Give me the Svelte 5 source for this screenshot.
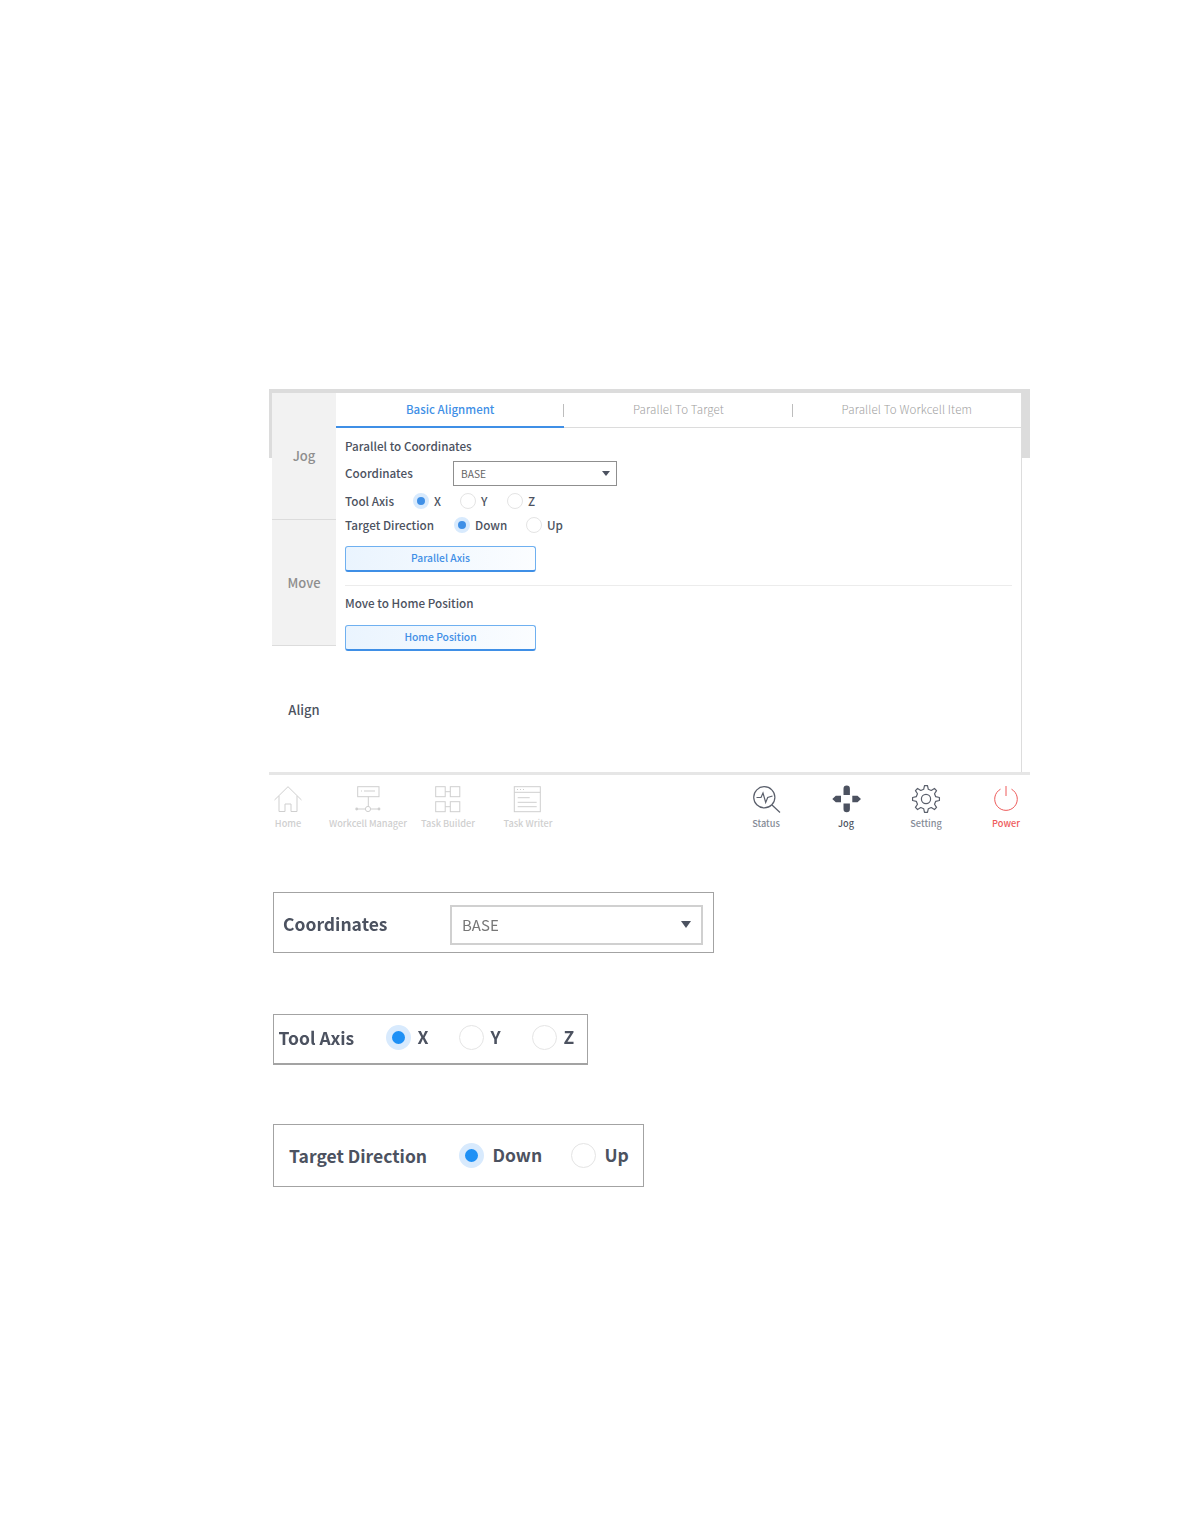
<script lang="ts">
  const tabs = ['Basic Alignment', 'Parallel To Target', 'Parallel To Workcell Item'];
  const side = ['Jog', 'Move', 'Align'];

  // gear outline, 8 teeth around the centre
  function gearPath(cx: number, cy: number, r1: number, r2: number, teeth: number) {
    let d = '';
    for (let i = 0; i < teeth; i++) {
      const a = (i / teeth) * Math.PI * 2 - Math.PI / 2;
      const step = (Math.PI * 2) / teeth;
      const pts = [
        [r2, a - step * 0.14],
        [r2, a + step * 0.14],
        [r1, a + step * 0.3],
        [r1, a + step * 0.7]
      ];
      for (const [r, t] of pts) {
        const x = (cx + r * Math.cos(t)).toFixed(2);
        const y = (cy + r * Math.sin(t)).toFixed(2);
        d += (d ? 'L' : 'M') + x + ' ' + y + ' ';
      }
    }
    return d + 'Z';
  }
  const gear = gearPath(15, 14, 10, 13.5, 8);
</script>

{#snippet radio(label, on, cls = '')}
  <span class="radio {cls}">
    <span class="dot" class:on></span>
    <span class="txt">{label}</span>
  </span>
{/snippet}

<div class="page">
  <div class="frame">
    <div class="panel">
      <div class="side">
        {#each side as s, i}
          <div class="side-item" class:current={i === 2}>{s}</div>
        {/each}
      </div>
      <div class="main">
        <div class="tabs">
          {#each tabs as t, i}
            <div class="tab" class:active={i === 0}>{t}</div>
          {/each}
        </div>
        <div class="body">
          <div class="heading">Parallel to Coordinates</div>
          <div class="row coord">
            <span class="label">Coordinates</span>
            <div class="select"><span>BASE</span><i class="caret"></i></div>
          </div>
          <div class="row axis">
            <span class="label">Tool Axis</span>
            <div class="radios">
              {@render radio('X', true)}
              {@render radio('Y', false)}
              {@render radio('Z', false)}
            </div>
          </div>
          <div class="row dir">
            <span class="label">Target Direction</span>
            <div class="radios">
              {@render radio('Down', true)}
              {@render radio('Up', false)}
            </div>
          </div>
          <button class="action first">Parallel Axis</button>
          <div class="divider"></div>
          <div class="heading home">Move to Home Position</div>
          <button class="action">Home Position</button>
        </div>
      </div>
    </div>
  </div>

  <nav class="nav">
    <div class="group">
      <div class="item off">
        <svg viewBox="0 0 30 30"><path d="M1.5 15 15 1.7 28.5 15M6 11v15.5h6V19h6v7.5h6V11" /></svg>
        <span>Home</span>
      </div>
      <div class="item off">
        <svg viewBox="0 0 30 30">
          <rect x="4.7" y="1.7" width="21.3" height="10" />
          <path d="M8 6h1M11 6h11M15.3 11.7V21.5M4 24h8M18 24h8" />
          <circle cx="15" cy="24" r="2.6" />
          <circle class="solid" cx="3.7" cy="24" r="1.4" />
          <circle class="solid" cx="26" cy="24" r="1.4" />
        </svg>
        <span>Workcell Manager</span>
      </div>
      <div class="item off">
        <svg viewBox="0 0 30 30">
          <rect x="2.7" y="1.7" width="9.5" height="10" />
          <rect x="17.3" y="1.7" width="9.5" height="10" />
          <rect x="2.7" y="16.7" width="9.5" height="10" />
          <rect x="17.3" y="16.7" width="9.5" height="10" />
          <path d="M12.2 6.7h5M12.2 21.7h5" />
        </svg>
        <span>Task Builder</span>
      </div>
      <div class="item off">
        <svg viewBox="0 0 30 30">
          <rect x="1.3" y="1.7" width="26" height="25" />
          <path d="M1.3 7.3h26M4 4.5h1M7 4.5h1M10 4.5h1M4.7 12.7h12M4.7 17.3h19M4.7 21.7h19" />
        </svg>
        <span>Task Writer</span>
      </div>
    </div>
    <div class="group">
      <div class="item status">
        <svg viewBox="0 0 30 30">
          <circle cx="13.3" cy="12.3" r="10.6" />
          <path d="M21 20 29 27.5M5.5 12.5H10l2-4.500 2.700 9.500 2-5 4.800-1.500" />
        </svg>
        <span>Status</span>
      </div>
      <div class="item jog">
        <svg viewBox="0 0 30 30">
          <path class="solid" d="M12.500 10V3.700a3.200 3.200 0 0 1 6.400 0V10zM12.500 18.500V24a3.200 3.200 0 0 0 6.400 0v-5.500zM1.300 14l3.500-3.300H10v6.600H4.800zM30 14l-3.500-3.300h-5.200v6.600h5.200z" />
        </svg>
        <span>Jog</span>
      </div>
      <div class="item status">
        <svg viewBox="0 0 30 30">
          <path d={gear} stroke-linejoin="round" />
          <circle cx="15" cy="14" r="4.600" />
        </svg>
        <span>Setting</span>
      </div>
      <div class="item power">
        <svg viewBox="0 0 30 30">
          <path d="M9.500 4.200a11.300 11.300 0 1 0 11 0M15 1v10" />
        </svg>
        <span>Power</span>
      </div>
    </div>
  </nav>

  <div class="callout c1">
    <span class="c-label">Coordinates</span>
    <div class="c-select"><span>BASE</span><i class="caret big"></i></div>
  </div>

  <div class="callout c2">
    <span class="c-label">Tool Axis</span>
    <div class="radios">
      {@render radio('X', true, 'big')}
      {@render radio('Y', false, 'big')}
      {@render radio('Z', false, 'big')}
    </div>
  </div>

  <div class="callout c3">
    <span class="c-label">Target Direction</span>
    <div class="radios">
      {@render radio('Down', true, 'big')}
      {@render radio('Up', false, 'big')}
    </div>
  </div>
</div>

<style>
  :global(body) {
    background: #fff;
  }

  .page {
    height: 1148px;
    padding: 389px 0 0 269px;
    font-family: 'Noto Sans CJK KR', 'Noto Sans', sans-serif;
    color: #4c5260;
  }

  .frame {
    width: 761px;
    height: 386px;
    box-sizing: border-box;
    padding: 4px 8px 0 3px;
    background: linear-gradient(#dcdcdc, #dcdcdc) top / 100% 69px no-repeat;
    border-bottom: 3px solid #e6e6e6;
  }

  .panel {
    display: flex;
    height: 379px;
    background: #fff;
    border-right: 1px solid #ddd;
    width: 749px;
  }

  .side {
    width: 64px;
    display: flex;
    flex-direction: column;
  }

  .side-item {
    flex: 1;
    display: flex;
    align-items: center;
    justify-content: center;
    background: #f2f2f2;
    color: #8e8e8e;
    font-size: 13px;
    font-weight: 500;
    border-bottom: 1px solid #dcdcdc;
  }

  .side-item.current {
    background: #fff;
    color: #4c5260;
    border-bottom: 0;
  }

  .main {
    flex: 1;
    min-width: 0;
  }

  .tabs {
    display: flex;
    height: 35px;
    box-sizing: border-box;
    border-bottom: 1px solid #dcdcdc;
  }

  .tab {
    flex: 1;
    display: flex;
    align-items: center;
    justify-content: center;
    font-size: 11.5px;
    font-weight: 300;
    letter-spacing: 0.15px;
    color: #a0a0a0;
    position: relative;
    padding-bottom: 2px;
  }

  .tab:not(:last-child)::after {
    content: '';
    position: absolute;
    right: 0;
    top: 11px;
    height: 13px;
    border-right: 1px solid #bdbdbd;
  }

  .tab.active {
    color: #3f8fe6;
    font-weight: 500;
    letter-spacing: 0;
    border-bottom: 2px solid #3f8fe6;
    margin-bottom: -1px;
  }

  .body {
    padding: 10px 9px 0;
  }

  .heading {
    font-size: 11.7px;
    font-weight: 500;
    line-height: 16px;
  }

  .row {
    display: flex;
    align-items: center;
    font-size: 11.7px;
    font-weight: 500;
  }

  .label,
  .txt {
    flex: none;
    padding-bottom: 2px;
  }

  .coord {
    margin-top: 7px;
    height: 25px;
  }

  .coord .label {
    width: 108px;
  }

  .select {
    width: 164px;
    height: 25px;
    box-sizing: border-box;
    border: 1px solid #8f8f8f;
    display: flex;
    align-items: center;
    justify-content: space-between;
    padding: 0 6px 0 7px;
    font-size: 10.2px;
    font-weight: 400;
    color: #666;
  }

  .caret {
    width: 0;
    height: 0;
    border-left: 4px solid transparent;
    border-right: 4px solid transparent;
    border-top: 5px solid #4c5260;
  }

  .caret.big {
    border-left-width: 5.5px;
    border-right-width: 5.5px;
    border-top-width: 7px;
  }

  .axis {
    margin-top: 3px;
    height: 24px;
  }

  .axis .label {
    width: 68px;
  }

  .axis .radio {
    width: 47px;
  }

  .dir {
    height: 24px;
  }

  .dir .label {
    width: 109px;
  }

  .dir .radio {
    width: 72px;
  }

  .radios {
    display: flex;
    align-items: center;
  }

  .radio {
    display: inline-flex;
    align-items: center;
    gap: 5px;
  }

  .dot {
    flex: none;
    width: 16px;
    height: 16px;
    box-sizing: border-box;
    border-radius: 50%;
    border: 1px solid #e4e4e4;
    background: #fff;
    display: block;
  }

  .dot.on {
    border: 4px solid #d8eafd;
    background: #3f8fe6;
  }

  .action {
    display: block;
    width: 191px;
    height: 26px;
    padding: 0 0 2px;
    box-sizing: border-box;
    border: 1px solid #6fb0f0;
    border-bottom: 2px solid #3f8fe6;
    border-radius: 3px;
    background: linear-gradient(90deg, #eaf4fe, #fbfdff);
    color: #3f8fe6;
    font-family: inherit;
    font-size: 10.3px;
    font-weight: 500;
  }

  .first {
    margin-top: 9px;
  }

  .divider {
    margin-top: 13px;
    border-top: 1px solid #ececec;
  }

  .home {
    margin-top: 9px;
    margin-bottom: 14px;
  }

  .nav {
    display: flex;
    justify-content: space-between;
    width: 798px;
    margin-left: -21px;
    height: 65px;
    box-sizing: border-box;
    padding-top: 10px;
  }

  .group {
    display: flex;
  }

  .item {
    width: 80px;
    display: flex;
    flex-direction: column;
    align-items: center;
    font-size: 9.2px;
    font-weight: 500;
    line-height: 12px;
    white-space: nowrap;
  }

  .item svg {
    display: block;
    width: 30px;
    height: 30px;
    margin-bottom: 2px;
    fill: none;
    stroke: currentColor;
    stroke-width: 1;
  }

  .item .solid {
    fill: currentColor;
    stroke: none;
  }

  .off {
    color: #cfcfcf;
  }

  .status {
    color: #858b96;
  }

  .status svg {
    color: #5a5f6b;
    stroke-width: 1.2;
  }

  .jog {
    color: #4c5260;
  }

  .power {
    color: #ee5a5a;
  }

  .callout {
    display: flex;
    align-items: center;
    box-sizing: border-box;
    border: 1.5px solid #a3a3a3;
    margin-left: 4px;
    font-weight: 700;
    font-size: 17.5px;
  }

  .c-label {
    flex: none;
  }

  .c1 {
    width: 441px;
    height: 61px;
    margin-top: 52px;
    padding: 5px 10px 0 9px;
    justify-content: space-between;
  }

  .c1 .c-label {
    padding-bottom: 3px;
  }

  .c1 > *,
  .c2 > * {
    filter: blur(0.4px);
  }

  .c-select {
    width: 253px;
    height: 40px;
    box-sizing: border-box;
    border: 2px solid #d0d0d0;
    display: flex;
    align-items: center;
    justify-content: space-between;
    padding: 0 10px 2px 10px;
    font-size: 15px;
    font-weight: 400;
    color: #777;
  }

  .c2 {
    width: 315px;
    height: 51px;
    margin-top: 61px;
    padding: 0 0 3px 4.5px;
    border-bottom-width: 2px;
  }

  .c2 .c-label {
    width: 107px;
  }

  .c2 .radio {
    width: 73px;
    gap: 7px;
  }

  .c3 {
    width: 371px;
    height: 63px;
    margin-top: 59px;
    padding-left: 15px;
  }

  .c3 .c-label {
    width: 169.5px;
  }

  .c3 .radio {
    width: 112px;
    gap: 9px;
  }

  .radio.big .dot {
    width: 25px;
    height: 25px;
  }

  .radio.big .dot.on {
    border-width: 6px;
    background: #1e90f5;
  }
</style>
